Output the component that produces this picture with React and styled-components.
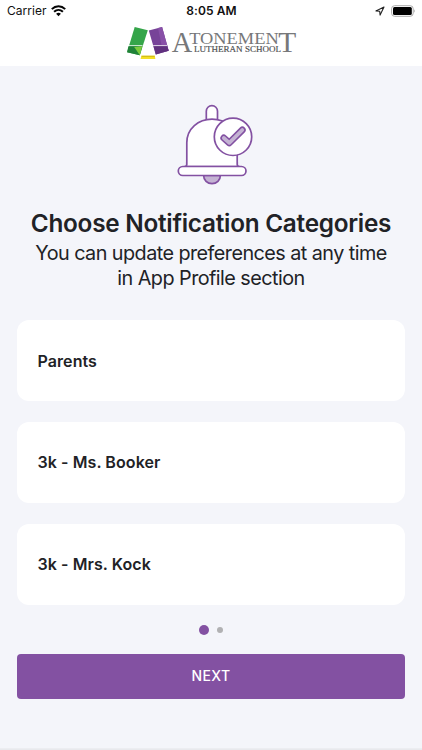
import React from "react";
import styled, { createGlobalStyle } from "styled-components";

const GlobalStyle = createGlobalStyle`
  *, *::before, *::after { box-sizing: border-box; }
  body {
    margin: 0;
    background: #f4f5fa;
    color: #212226;
    font-family: Inter, "Liberation Sans", sans-serif;
  }
`;

const Screen = styled.div`
  display: flex;
  flex-direction: column;
  height: 750px;
  overflow: hidden;
`;

const Header = styled.header`
  display: flex;
  flex-direction: column;
  flex: none;
  height: 66px;
  background: #fff;
`;

const StatusBar = styled.div`
  display: grid;
  grid-template-columns: 1fr auto 1fr;
  align-items: center;
  height: 22px;
  padding: 0 6px 0 7px;
  color: #111;
  font-size: 12px;
  line-height: 22px;
`;

const StatusGroup = styled.div`
  display: flex;
  align-items: center;
  justify-content: ${(p) => (p.$end ? "flex-end" : "flex-start")};
  gap: ${(p) => (p.$end ? 6 : 5)}px;
  letter-spacing: ${(p) => (p.$end ? 0 : 0.02)}px;
`;

const Clock = styled.time`
  font-weight: 600;
  letter-spacing: 0.1px;
`;

const LogoSlot = styled.div`
  display: flex;
  justify-content: center;
  height: 44px;
  padding-left: 2px;

  svg { display: block; }
`;

const Content = styled.main`
  display: flex;
  flex-direction: column;
  flex: 1;
  padding: 34px 17px 0;
`;

const BellSlot = styled.div`
  display: flex;
  justify-content: center;
  height: 100px;
  padding-left: 8px;
`;

const Title = styled.h1`
  margin: 7px 0 0;
  font-size: 24.3px;
  font-weight: 600;
  line-height: 32px;
  letter-spacing: -0.25px;
  text-align: center;
  white-space: nowrap;
`;

const Subtitle = styled.p`
  margin: 2px 0 0;
  font-size: 19.8px;
  line-height: 25px;
  letter-spacing: -0.54px;
  text-align: center;
  white-space: nowrap;
`;

const CategoryList = styled.div`
  display: grid;
  grid-auto-rows: 81px;
  gap: 20.75px;
  margin-top: 29px;
`;

const CategoryCard = styled.div`
  display: flex;
  align-items: center;
  padding: 0 20.5px;
  border-radius: 12px;
  background: #fff;
  font-size: 16px;
  font-weight: 600;
  letter-spacing: 0.08px;
`;

const Pager = styled.div`
  display: flex;
  align-items: center;
  justify-content: center;
  gap: 8px;
  height: 10px;
  margin-top: 20px;
`;

const Dot = styled.span`
  width: ${(p) => (p.$active ? 10 : 6)}px;
  height: ${(p) => (p.$active ? 10 : 6)}px;
  border-radius: 50%;
  background: ${(p) => (p.$active ? "#8351a2" : "#b1b1b3")};
`;

const NextButton = styled.button`
  flex: none;
  height: 44.5px;
  margin-top: 19.5px;
  padding: 0;
  border: 0;
  border-radius: 4px;
  background: #8351a2;
  color: #fff;
  font: 500 14px/44px Inter, "Liberation Sans", sans-serif;
  letter-spacing: 0.4px;
`;

const BottomEdge = styled.footer`
  flex: none;
  height: 2px;
  background: linear-gradient(#eeeff3, #e6e7eb);
`;

const WifiIcon = () => (
  <svg width="15" height="12" viewBox="0 0 15 12">
    <g fill="none" stroke="#050505" strokeWidth="2">
      <path d="M.8 4.1C4.6.3 10.4.3 14.2 4.1" />
      <path d="M3.1 6.8C5.7 4.3 9.3 4.3 11.9 6.8" />
    </g>
    <path d="M5.1 8.8Q7.5 6.8 9.9 8.8L7.5 11.2Z" fill="#050505" />
  </svg>
);

const LocationIcon = () => (
  <svg width="10" height="10" viewBox="0 0 10 10">
    <path d="M.9 4.9 9 1 5.1 9.1 4.7 5.3Z" fill="none" stroke="#222" strokeWidth="1.1" strokeLinejoin="round" />
  </svg>
);

const BatteryIcon = () => (
  <svg width="25" height="12" viewBox="0 0 25 12">
    <rect x=".6" y=".7" width="21.6" height="10.6" rx="3" fill="#fff" stroke="#aaa" />
    <rect x="2" y="2" width="18.8" height="8" rx="1.5" fill="#000" />
    <path d="M23.3 4.2Q24.8 6 23.3 7.8Z" fill="#999" />
  </svg>
);

const SchoolLogo = () => (
  <svg width="172" height="40" viewBox="126 22 172 40">
    <path d="M134.7 27 147.8 30.2 139.8 55.3 127.1 52.2Z" fill="#35a54a" />
    <path d="M128.4 46.2 142.2 46 139.8 55.3 127.1 52.2Z" fill="#208238" />
    <path d="M134.2 47 142.2 46.3 139.8 55.3Z" fill="#7bcc3c" />
    <path d="M148.8 30.5 162.1 27 168.7 50.7 155.8 54.5Z" fill="#774398" />
    <path d="M158 28.1 162.1 27 168.7 50.7 163 52.2Z" fill="#8850a7" />
    <path d="M153.5 46.2 167 45.6 168.7 50.7 155.8 54.5Z" fill="#60317e" />
    <path d="M128.3 45.6H142.5M153.2 45.6H167.2" stroke="#fff" strokeWidth=".8" />
    <path d="M141.4 55.7H154.8L155.4 59H140.6Z" fill="#f3df24" />
    <path d="M141.4 55.7H154.8L154.5 56.8H141.7Z" fill="#c8b512" />
    <g fill="#77787a" fontFamily="'Liberation Serif', serif">
      <text x="171.8" y="51.7" fontSize="29" textLength="20.5" lengthAdjust="spacingAndGlyphs">A</text>
      <text x="189.2" y="43.8" fontSize="17.6" textLength="89.5" lengthAdjust="spacingAndGlyphs">TONEMEN</text>
      <text x="278.2" y="51.8" fontSize="29.5" textLength="18" lengthAdjust="spacingAndGlyphs">T</text>
      <text x="194" y="51.9" fontSize="8" fill="#4e4f51" stroke="#4e4f51" strokeWidth=".15" textLength="87" lengthAdjust="spacingAndGlyphs">LUTHERAN SCHOOL</text>
    </g>
  </svg>
);

const BellIcon = () => (
  <svg width="80" height="90" viewBox="175 100 80 90" fill="#fff" stroke="#8351a2" strokeWidth="1.7">
    <path d="M206.3 124V111.2a5.6 5.6 0 0 1 11.2 0V124Z" />
    <path d="M203.6 175.5a8.4 8.2 0 0 0 16.8 0Z" fill="#c4b3d3" />
    <path d="M186.8 166.5V142.8C186.8 128.5 198.5 119.2 212 119.2S237.2 128.5 237.2 142.8V166.5Z" />
    <path d="M186.8 162V164.5Q186.6 166.4 184.5 166.5H239.5Q237.4 166.4 237.2 164.5V162" />
    <rect x="178.3" y="166.5" width="67.7" height="9" rx="4.5" />
    <circle cx="233" cy="136.8" r="18.7" />
    <path d="M223.8 138 229.3 142.9 242.3 130" fill="none" strokeWidth="6.9" strokeLinecap="round" strokeLinejoin="round" />
    <path d="M223.8 138 229.3 142.9 242.3 130" fill="none" stroke="#c4b3d3" strokeWidth="3.7" strokeLinecap="round" strokeLinejoin="round" />
  </svg>
);

const categories = ["Parents", "3k - Ms. Booker", "3k - Mrs. Kock"];

export default function App() {
  return (
    <Screen>
      <GlobalStyle />
      <Header>
        <StatusBar>
          <StatusGroup>
            <span>Carrier</span>
            <WifiIcon />
          </StatusGroup>
          <Clock>8:05 AM</Clock>
          <StatusGroup $end>
            <LocationIcon />
            <BatteryIcon />
          </StatusGroup>
        </StatusBar>
        <LogoSlot>
          <SchoolLogo />
        </LogoSlot>
      </Header>
      <Content>
        <BellSlot>
          <BellIcon />
        </BellSlot>
        <Title>Choose Notification Categories</Title>
        <Subtitle>
          You can update preferences at any time
          <br />
          in App Profile section
        </Subtitle>
        <CategoryList>
          {categories.map((name) => (
            <CategoryCard key={name}>{name}</CategoryCard>
          ))}
        </CategoryList>
        <Pager>
          <Dot $active />
          <Dot />
        </Pager>
        <NextButton type="button">NEXT</NextButton>
      </Content>
      <BottomEdge />
    </Screen>
  );
}
